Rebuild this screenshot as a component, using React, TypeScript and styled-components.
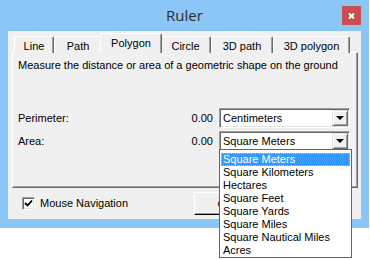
import React, { useState } from 'react';
import styled, { createGlobalStyle } from 'styled-components';

const GlobalStyle = createGlobalStyle`
  html, body {
    margin: 0;
    padding: 0;
    background: #ffffff;
  }
  body {
    font-family: "Liberation Sans", Arial, sans-serif;
    font-size: 11px;
    color: #000000;
  }
`;

const TABS = ['Line', 'Path', 'Polygon', 'Circle', '3D path', '3D polygon'];
const TAB_WIDTHS = [40, 48, 58, 51, 62, 77];

const AREA_UNITS = [
  'Square Meters',
  'Square Kilometers',
  'Hectares',
  'Square Feet',
  'Square Yards',
  'Square Miles',
  'Square Nautical Miles',
  'Acres',
];

const App: React.FC = () => {
  const [selectedTab, setSelectedTab] = useState('Polygon');
  const [mouseNav, setMouseNav] = useState(true);

  return (
    <Page>
      <GlobalStyle />
      <Window>
        <TitleBar>
          <span />
          <Title>Ruler</Title>
          <CloseButton>
            <svg width="7" height="6" viewBox="0 0 7 6">
              <path d="M1 0.5 L6 5.5 M6 0.5 L1 5.5" stroke="#fff" strokeWidth="1.8" />
            </svg>
          </CloseButton>
        </TitleBar>
        <Body>
          <TabRow>
            {TABS.map((tab, i) => (
              <Tab
                key={tab}
                $active={selectedTab === tab}
                $width={TAB_WIDTHS[i]}
                onClick={() => setSelectedTab(tab)}
              >
                {tab}
              </Tab>
            ))}
          </TabRow>
          <Panel>
            <Description>
              Measure the distance or area of a geometric shape on the ground
            </Description>
            <Fields>
              <FieldRow>
                <Label>Perimeter:</Label>
                <Value>0.00</Value>
                <Combo>
                  <ComboText>Centimeters</ComboText>
                  <ComboArrow>
                    <Triangle />
                  </ComboArrow>
                </Combo>
              </FieldRow>
              <FieldRow>
                <Label>Area:</Label>
                <Value>0.00</Value>
                <Combo>
                  <ComboText>Square Meters</ComboText>
                  <ComboArrow>
                    <Triangle />
                  </ComboArrow>
                  <DropList>
                    {AREA_UNITS.map((unit, i) => (
                      <DropItem key={unit} $selected={i === 0}>
                        {unit}
                      </DropItem>
                    ))}
                  </DropList>
                </Combo>
              </FieldRow>
            </Fields>
          </Panel>
          <BottomRow>
            <CheckLabel onClick={() => setMouseNav(!mouseNav)}>
              <CheckBox>
                {mouseNav && (
                  <svg width="9" height="9" viewBox="0 0 9 9">
                    <path d="M1 4 L3.5 6.5 L8 1.5" fill="none" stroke="#000" strokeWidth="1.8" />
                  </svg>
                )}
              </CheckBox>
              Mouse Navigation
            </CheckLabel>
            <Button>Close</Button>
          </BottomRow>
        </Body>
      </Window>
    </Page>
  );
};

export default App;

// Styled components

const Page = styled.div`
  width: 370px;
  height: 260px;
  background: #ffffff;
`;

const Window = styled.div`
  width: 369px;
  height: 228px;
  box-sizing: border-box;
  background: #8cc6f6;
  padding: 0 8px 9px 8px;
  display: flex;
  flex-direction: column;
`;

const TitleBar = styled.div`
  height: 31px;
  display: grid;
  grid-template-columns: 1fr auto 1fr;
  align-items: start;
`;

const Title = styled.div`
  font-family: "Open Sans", "Liberation Sans", Arial, sans-serif;
  font-size: 15px;
  color: #2b2b2b;
  line-height: 18px;
  padding-top: 6px;
`;

const CloseButton = styled.div`
  justify-self: end;
  margin-top: 6px;
  width: 19px;
  height: 19px;
  background: #c75050;
  display: flex;
  align-items: center;
  justify-content: center;
`;

const Body = styled.div`
  flex: 1;
  background: #f0f0f0;
  padding: 3px 3px 0 4px;
  display: flex;
  flex-direction: column;
`;

const TabRow = styled.div`
  height: 19px;
  display: flex;
  align-items: flex-end;
  padding-left: 2px;
  position: relative;
  z-index: 1;
  margin-bottom: -1px;
`;

const Tab = styled.div<{ $active: boolean; $width: number }>`
  box-sizing: border-box;
  width: ${({ $width, $active }) => ($active ? $width + 4 : $width)}px;
  height: ${({ $active }) => ($active ? 20 : 17)}px;
  margin: 0 ${({ $active }) => ($active ? -2 : 0)}px;
  position: relative;
  z-index: ${({ $active }) => ($active ? 2 : 1)};
  background: #f0f0f0;
  border-top: 1px solid #ffffff;
  border-left: 1px solid #ffffff;
  border-right: 1px solid #696969;
  box-shadow: inset -1px 0 0 #a0a0a0;
  border-radius: 2px 2px 0 0;
  text-align: center;
  line-height: 13px;
  padding-top: 3px;
  cursor: default;
`;

const Panel = styled.div`
  height: 136px;
  box-sizing: border-box;
  border-top: 1px solid #ffffff;
  border-left: 1px solid #ffffff;
  border-right: 1px solid #696969;
  border-bottom: 1px solid #696969;
  box-shadow: inset -1px -1px 0 #a0a0a0;
  padding: 6px 7px 0 5px;
`;

const Description = styled.div`
  line-height: 13px;
`;

const Fields = styled.div`
  margin-top: 36px;
  display: flex;
  flex-direction: column;
  gap: 3px;
`;

const FieldRow = styled.div`
  display: grid;
  grid-template-columns: 1fr auto 131px;
  column-gap: 6px;
  align-items: center;
`;

const Label = styled.span`
  line-height: 13px;
`;

const Value = styled.span`
  line-height: 13px;
  text-align: right;
`;

const Combo = styled.div`
  position: relative;
  height: 20px;
  box-sizing: border-box;
  background: #ffffff;
  border-top: 1px solid #a0a0a0;
  border-left: 1px solid #a0a0a0;
  border-right: 1px solid #ffffff;
  border-bottom: 1px solid #ffffff;
  box-shadow: inset 1px 1px 0 #696969, inset -1px -1px 0 #e3e3e3;
  display: flex;
  align-items: center;
  padding: 1px 1px 1px 3px;
`;

const ComboText = styled.span`
  flex: 1;
  line-height: 13px;
`;

const ComboArrow = styled.div`
  width: 16px;
  height: 16px;
  box-sizing: border-box;
  background: #f0f0f0;
  border-top: 1px solid #e3e3e3;
  border-left: 1px solid #e3e3e3;
  border-right: 1px solid #696969;
  border-bottom: 1px solid #696969;
  box-shadow: inset 1px 1px 0 #ffffff, inset -1px -1px 0 #a0a0a0;
  display: flex;
  align-items: center;
  justify-content: center;
`;

const Triangle = styled.div`
  width: 0;
  height: 0;
  border-left: 4px solid transparent;
  border-right: 4px solid transparent;
  border-top: 4px solid #000000;
`;

const DropList = styled.div`
  position: absolute;
  top: 17px;
  left: -1px;
  width: 133px;
  box-sizing: border-box;
  background: #ffffff;
  border: 1px solid #646464;
  padding: 3px 1px 0 1px;
  z-index: 5;
`;

const DropItem = styled.div<{ $selected: boolean }>`
  height: 13px;
  line-height: 13px;
  box-sizing: border-box;
  padding-left: 2px;
  background: ${({ $selected }) => ($selected ? '#3399ff' : 'transparent')};
  color: ${({ $selected }) => ($selected ? '#ffffff' : '#000000')};
  outline: ${({ $selected }) => ($selected ? '1px dotted #f5c060' : 'none')};
  outline-offset: -1px;
  white-space: nowrap;
`;

const BottomRow = styled.div`
  flex: 1;
  display: grid;
  grid-template-columns: 172px 75px;
  align-items: center;
  padding-left: 10px;
`;

const CheckLabel = styled.label`
  display: flex;
  align-items: center;
  gap: 5px;
  line-height: 13px;
  cursor: default;
`;

const CheckBox = styled.span`
  width: 13px;
  height: 13px;
  box-sizing: border-box;
  background: #ffffff;
  border-top: 1px solid #a0a0a0;
  border-left: 1px solid #a0a0a0;
  border-right: 1px solid #ffffff;
  border-bottom: 1px solid #ffffff;
  box-shadow: inset 1px 1px 0 #696969, inset -1px -1px 0 #e3e3e3;
  display: flex;
  align-items: center;
  justify-content: center;
`;

const Button = styled.div`
  height: 23px;
  box-sizing: border-box;
  background: #f0f0f0;
  border-top: 1px solid #ffffff;
  border-left: 1px solid #ffffff;
  border-right: 1px solid #000000;
  border-bottom: 1px solid #000000;
  box-shadow: inset -1px -1px 0 #a0a0a0;
  display: flex;
  align-items: center;
  justify-content: center;
`;
